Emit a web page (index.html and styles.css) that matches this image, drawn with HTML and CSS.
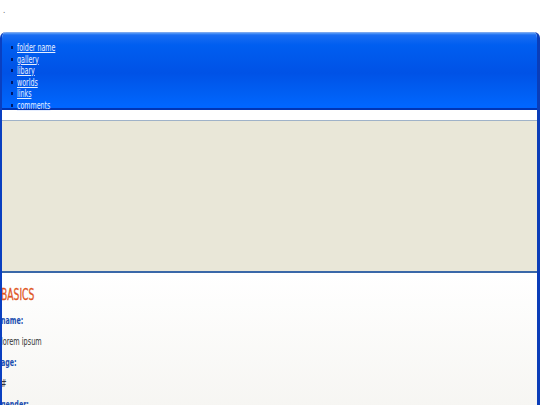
FILE: index.html
```html
<!DOCTYPE html>
<html>
<head>
<meta charset="utf-8">
<link rel="stylesheet" href="styles.css">
</head>
<body>
<div class="dot">.</div>
<div class="window">
  <div class="header">
    <ul class="nav">
      <li><a href="#">folder name</a></li>
      <li><a href="#">gallery</a></li>
      <li><a href="#">libary</a></li>
      <li><a href="#">worlds</a></li>
      <li><a href="#">links</a></li>
      <li><a href="#">comments</a></li>
    </ul>
  </div>
  <div class="strip"></div>
  <div class="beige"></div>
  <div class="content">
    <h2 class="title">BASICS</h2>
    <p class="label">name:</p>
    <p class="value">lorem ipsum</p>
    <p class="label">age:</p>
    <p class="value">#</p>
    <p class="label">gender:</p>
  </div>
</div>
</body>
</html>
```

FILE: styles.css
```css
html, body {
  margin: 0;
  padding: 0;
  background: #ffffff;
  overflow: hidden;
  height: 405px;
}
body {
  font-family: "DejaVu Sans Condensed", "Liberation Sans Narrow", sans-serif;
  font-stretch: condensed;
  font-size: 11px;
}
.dot {
  height: 32px;
  padding-left: 3px;
  font-size: 8px;
  line-height: 22px;
  color: #666;
}
.window {
  border-left: 2px solid #0a3fc0;
  border-right: 3px solid #0b3db8;
  border-radius: 6px 6px 0 0;
  background: #fff;
  height: 373px;
  overflow: hidden;
}
.header {
  background: linear-gradient(to bottom, #5a9cf6 0px, #1a6df2 2px, #005ef0 12px, #0052e6 40px, #0060f5 62px, #0066ff 73px);
  border-bottom: 2px solid #0035b5;
  border-top: 1px solid #7aa8f0;
  box-sizing: border-box;
  height: 78px;
}
.nav {
  margin: 0;
  padding: 9px 0 0 15px;
  list-style: none;
  line-height: 11.5px;
  font-size: 11px;
}
.nav li {
  display: flex;
  align-items: center;
}
.nav li::before {
  content: "";
  width: 2px;
  height: 3px;
  background: #001a66;
  margin-left: -6px;
  margin-right: 4px;
  flex: none;
}
.nav a {
  display: inline-block;
  color: #e6eeff;
  text-decoration: underline;
  transform: scaleX(0.64);
  transform-origin: left center;
}
.strip {
  height: 10px;
  background: #ffffff;
  border-bottom: 1px solid #9fb2c8;
}
.beige {
  height: 150px;
  background: #e9e7d8;
  border-bottom: 2px solid #3a68a8;
}
.content {
  height: 200px;
  background: linear-gradient(to bottom, #ffffff 0%, #f1f0eb 100%);
  padding-top: 14px;
  margin-left: -1px;
}
.title {
  margin: 0 0 14px 0;
  font-size: 15px;
  font-weight: normal;
  color: #e0561f;
  line-height: 16px;
  transform: scaleX(0.68);
  transform-origin: left center;
  -webkit-text-stroke: 0.3px #e0561f;
}
.label {
  margin: 0 0 13px 0;
  font-weight: bold;
  color: #1b4fb0;
  line-height: 8px;
  transform: scaleX(0.64);
  transform-origin: left center;
}
.value {
  margin: 0 0 13px 0;
  color: #333;
  line-height: 8px;
  transform: scaleX(0.66);
  transform-origin: left center;
}
```
